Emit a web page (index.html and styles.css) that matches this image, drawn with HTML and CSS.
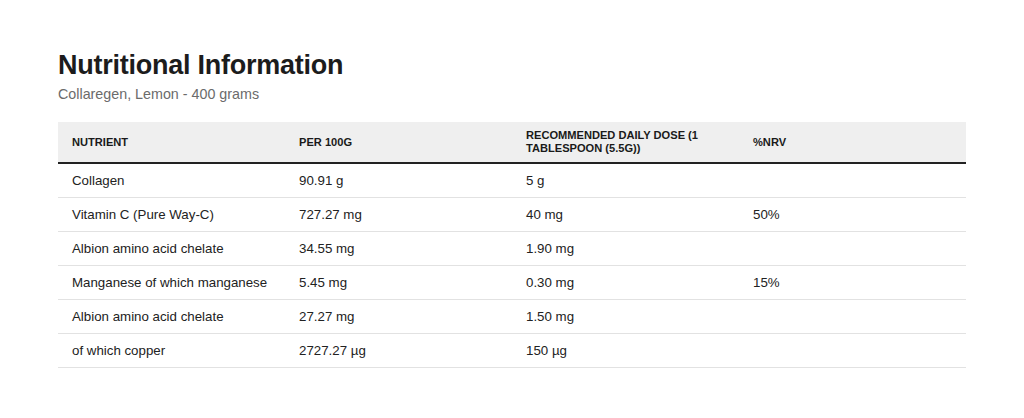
FILE: index.html
```html
<!DOCTYPE html>
<html lang="en">
<head>
<meta charset="utf-8">
<title>Nutritional Information</title>
<link rel="stylesheet" href="styles.css">
</head>
<body>
<section class="panel">
  <h1 class="title">Nutritional Information</h1>
  <p class="subtitle">Collaregen, Lemon - 400 grams</p>
  <table class="nutri">
    <thead>
      <tr>
        <th>Nutrient</th>
        <th>Per 100g</th>
        <th>Recommended daily dose (1 tablespoon (5.5g))</th>
        <th>%NRV</th>
      </tr>
    </thead>
    <tbody>
      <tr><td>Collagen</td><td>90.91 g</td><td>5 g</td><td></td></tr>
      <tr><td>Vitamin C (Pure Way-C)</td><td>727.27 mg</td><td>40 mg</td><td>50%</td></tr>
      <tr><td>Albion amino acid chelate</td><td>34.55 mg</td><td>1.90 mg</td><td></td></tr>
      <tr><td>Manganese of which manganese</td><td>5.45 mg</td><td>0.30 mg</td><td>15%</td></tr>
      <tr><td>Albion amino acid chelate</td><td>27.27 mg</td><td>1.50 mg</td><td></td></tr>
      <tr><td>of which copper</td><td>2727.27 µg</td><td>150 µg</td><td></td></tr>
    </tbody>
  </table>
</section>
</body>
</html>
```

FILE: styles.css
```css
html, body {
  margin: 0;
  padding: 0;
  background: #ffffff;
}
body {
  font-family: "Liberation Sans", Arial, sans-serif;
  color: #222222;
}
.panel {
  padding: 49px 58px 0 58px;
}
.title {
  margin: 0;
  font-size: 27px;
  line-height: 32px;
  font-weight: 700;
  letter-spacing: -0.25px;
  color: #1c1c1c;
}
.subtitle {
  margin: 3px 0 0 0;
  font-size: 14.3px;
  line-height: 20px;
  color: #6b6b6b;
}
.nutri {
  margin-top: 18px;
  width: 100%;
  border-collapse: collapse;
  table-layout: fixed;
}
.nutri th {
  background: #efefef;
  text-align: left;
  vertical-align: middle;
  font-size: 11.1px;
  line-height: 13px;
  font-weight: 700;
  text-transform: uppercase;
  color: #1a1a1a;
  padding: 7px 14px;
  height: 26px;
  border-bottom: 2px solid #222222;
}
.nutri td {
  font-size: 13.3px;
  line-height: 17px;
  padding: 8px 14px;
  color: #222222;
  border-bottom: 1px solid #e2e2e2;
  vertical-align: middle;
}
```
